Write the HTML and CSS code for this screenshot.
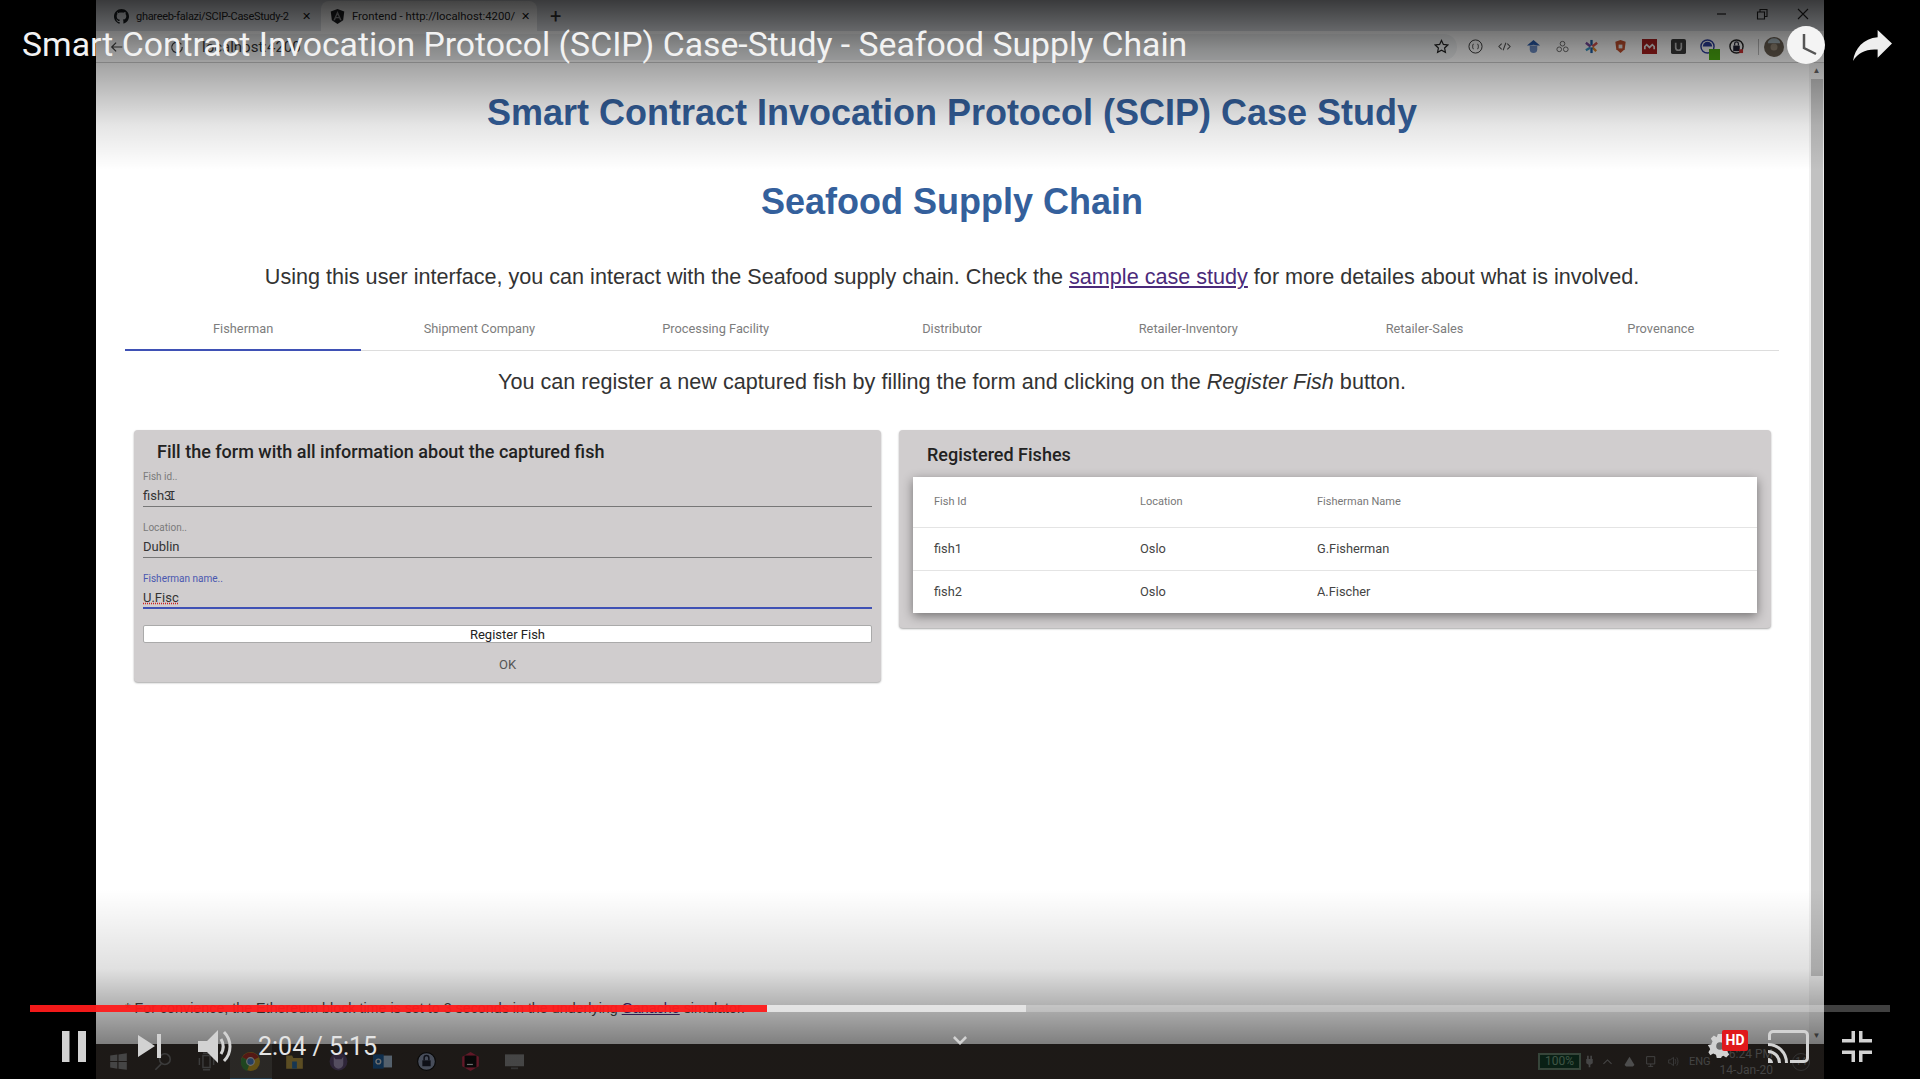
FILE: index.html
```html
<!DOCTYPE html>
<html lang="en">
<head>
    <meta charset="UTF-8">
    <meta name="viewport" content="width=device-width, initial-scale=1.0">
    <title>Smart Contract Invocation Protocol (SCIP) Case-Study - Seafood Supply Chain</title>
    <link rel="stylesheet" href="styles.css">
</head>
<body>

<div class="player">
    <div class="browser">
        <div class="tabstrip">
            <div class="tab">
                <svg class="tab-icon" viewBox="0 0 16 16"><path fill="#1b1f23" d="M8 0C3.6 0 0 3.6 0 8c0 3.5 2.3 6.5 5.5 7.6.4.1.5-.2.5-.4v-1.4c-2.2.5-2.7-1-2.7-1-.4-.9-.9-1.2-.9-1.2-.7-.5.1-.5.1-.5.8.1 1.2.8 1.2.8.7 1.2 1.9.9 2.3.7.1-.5.3-.9.5-1.1-1.8-.2-3.6-.9-3.6-4 0-.9.3-1.6.8-2.1-.1-.2-.4-1 .1-2.1 0 0 .7-.2 2.2.8.6-.2 1.3-.3 2-.3s1.4.1 2 .3c1.500-1 2.2-.8 2.2-.8.4 1.1.2 1.9.1 2.1.5.6.8 1.3.8 2.1 0 3.1-1.9 3.7-3.7 3.9.3.3.6.8.6 1.5v2.2c0 .2.1.5.6.4C13.7 14.5 16 11.5 16 8c0-4.4-3.6-8-8-8z"/></svg>
                <span class="tab-title tab-title-long">ghareeb-falazi/SCIP-CaseStudy-2</span>
                <span class="tab-close">✕</span>
            </div>
            <div class="tab tab-active">
                <svg class="tab-icon" viewBox="0 0 16 16"><path fill="#1c1d20" d="M8 0 .8 2.6 2 12l6 4 6-4 1.2-9.4z"/><path fill="#9a9a9c" d="M8 2.2 3.6 12h1.7l.9-2.2h3.6l.9 2.2h1.7zM8 6l1.3 2.6H6.7z"/></svg>
                <span class="tab-title">Frontend - http://localhost:4200/</span>
                <span class="tab-close">✕</span>
            </div>
            <span class="tab-new">+</span>
            <div class="win-buttons">
                <svg viewBox="0 0 14 14"><path d="M3 7h9" stroke="#222" stroke-width="1.2"/></svg>
                <svg viewBox="0 0 14 14" fill="none" stroke="#222" stroke-width="1.1"><path d="M2.500 5h7v7h-7zM5 5V2.500h7v7H9.500"/></svg>
                <svg viewBox="0 0 14 14"><path d="M2 2l10 10M12 2 2 12" stroke="#222" stroke-width="1.1"/></svg>
            </div>
        </div>
        <div class="toolbar">
            <svg class="nav-icon" viewBox="0 0 16 16" fill="none" stroke="#444" stroke-width="1.4"><path d="M14 8H2M7 3 2 8l5 5"/></svg>
            <div class="omnibox">
                <svg class="nav-icon" viewBox="0 0 16 16" fill="none" stroke="#444" stroke-width="1.4"><path d="M13 5a6 6 0 1 0 1 3"/></svg>
                <span class="url">localhost:4200</span>
                <svg class="star" viewBox="0 0 16 16" fill="none" stroke="#222" stroke-width="1.3"><path d="m8 1.500 2 4.300 4.700.6-3.400 3.200.9 4.700L8 12l-4.200 2.300.9-4.700L1.300 6.400 6 5.800z"/></svg>
            </div>
            <div class="extensions">
                <svg viewBox="0 0 16 16" fill="none" stroke="#333" stroke-width="1"><circle cx="8" cy="8" r="7"/><path d="M6 5.500c-1 0-1 1-1 2.500s0 2.500 1 2.500M10 5.500c1 0 1 1 1 2.500s0 2.500-1 2.500"/></svg>
                <svg viewBox="0 0 16 16" fill="none" stroke="#555" stroke-width="1.1"><path d="M5 5 2 8l3 3M11 5l3 3-3 3M9.500 4l-3 8"/></svg>
                <svg viewBox="0 0 16 16"><path fill="#2a5daf" d="M8 1 1 7h3l4-1 4 1h3z"/><path fill="#6f8fc7" d="M4 7h8v4a4 4 0 0 1-8 0z"/></svg>
                <svg viewBox="0 0 16 16" fill="none" stroke="#666" stroke-width="1"><circle cx="4.500" cy="11" r="2.500"/><circle cx="11.500" cy="11" r="2.500"/><circle cx="8" cy="5" r="2.500"/></svg>
                <svg viewBox="0 0 16 16" stroke-width="2.500"><path stroke="#1d5fa8" d="M8 1v6"/><path stroke="#d9534f" d="M14 4 9 8"/><path stroke="#e08a2c" d="m13 13-4-4"/><path stroke="#1d5fa8" d="M8 15V9"/><path stroke="#3a9bc8" d="M2 12l5-3"/><path stroke="#7a4aa0" d="m2 4 5 4"/></svg>
                <svg viewBox="0 0 16 16"><path fill="#c4502e" d="M8 1 2.500 3 3.500 11 8 15l4.500-4 1-8z"/><rect x="6" y="6" width="4" height="4" fill="#eee"/></svg>
                <svg viewBox="0 0 16 16"><rect width="16" height="16" fill="#a91f1f"/><path d="M3 11V8l2-2 3 3 3-3 2 2v3" fill="none" stroke="#eee" stroke-width="1.800"/></svg>
                <svg viewBox="0 0 16 16"><rect width="16" height="16" rx="2" fill="#3a3a3a"/><path d="M5 4v5a3 3 0 0 0 6 0V4" fill="none" stroke="#bbb" stroke-width="1.800"/></svg>
                <span class="ext-badge"><svg viewBox="0 0 16 16"><circle cx="8" cy="8" r="7" fill="none" stroke="#2c3e9e" stroke-width="1.500"/><path d="M3 8a5 5 0 0 1 10 0z" fill="#2c3e9e"/></svg><i class="ext-green"></i></span>
                <svg viewBox="0 0 16 16"><circle cx="8" cy="8" r="7" fill="none" stroke="#222" stroke-width="1.500"/><rect x="4.500" y="7" width="7" height="6" fill="#223"/><path d="M6 7V5a2 2 0 0 1 4 0v2" fill="none" stroke="#223" stroke-width="1.300"/><rect x="11" y="11" width="4" height="4" fill="#c33"/></svg>
                <i class="ext-sep"></i>
                <svg class="avatar" viewBox="0 0 16 16"><circle cx="8" cy="8" r="8" fill="#6a5f52"/><path d="M3 5a5 4 0 0 1 10 0z" fill="#a9b8bf"/><circle cx="8" cy="8" r="2.800" fill="#9a8d7c"/></svg>
            </div>
        </div>
        <div class="viewport">
            <div class="page">
                <h1 class="page-title">Smart Contract Invocation Protocol (SCIP) Case Study</h1>
                <h1 class="page-subtitle">Seafood Supply Chain</h1>
                <p class="lead">Using this user interface, you can interact with the Seafood supply chain. Check the <a href="#">sample case study</a> for more detailes about what is involved.</p>
                <div class="tabs">
                    <div class="tabs-item tabs-item-active">Fisherman</div>
                    <div class="tabs-item">Shipment Company</div>
                    <div class="tabs-item">Processing Facility</div>
                    <div class="tabs-item">Distributor</div>
                    <div class="tabs-item">Retailer-Inventory</div>
                    <div class="tabs-item">Retailer-Sales</div>
                    <div class="tabs-item">Provenance</div>
                </div>
                <p class="hint">You can register a new captured fish by filling the form and clicking on the <em>Register Fish</em> button.</p>
                <div class="cards">
                    <div class="card card-form">
                        <h2 class="card-title">Fill the form with all information about the captured fish</h2>
                        <div class="field">
                            <label>Fish id..</label>
                            <div class="field-value">fish3<span class="cursor">I</span></div>
                        </div>
                        <div class="field">
                            <label>Location..</label>
                            <div class="field-value">Dublin</div>
                        </div>
                        <div class="field field-focus">
                            <label>Fisherman name..</label>
                            <div class="field-value"><span class="misspelt">U.Fisc</span></div>
                        </div>
                        <button class="register">Register Fish</button>
                        <div class="ok">OK</div>
                    </div>
                    <div class="card card-table">
                        <h2 class="card-title">Registered Fishes</h2>
                        <table class="fish-table">
                            <thead>
                                <tr><th>Fish Id</th><th>Location</th><th>Fisherman Name</th></tr>
                            </thead>
                            <tbody>
                                <tr><td>fish1</td><td>Oslo</td><td>G.Fisherman</td></tr>
                                <tr><td>fish2</td><td>Oslo</td><td>A.Fischer</td></tr>
                            </tbody>
                        </table>
                    </div>
                </div>
                <p class="footnote">* For convience, the Ethereum block time is set to 3 seconds in the underlying <a href="#">Ganache</a> simulator.</p>
            </div>
            <div class="scrollbar">
                <span class="scroll-arrow">▲</span>
                <div class="scroll-thumb"></div>
                <span class="scroll-arrow">▼</span>
            </div>
        </div>
        <div class="taskbar">
            <svg viewBox="0 0 16 16"><path fill="#8a8a8a" d="M1 3l6-1v5.500H1zM8 2l7-1v6.500H8zM1 8.500h6V14l-6-1zM8 8.500h7V15l-7-1z"/></svg>
            <svg viewBox="0 0 16 16" fill="none" stroke="#777" stroke-width="1.300"><circle cx="10" cy="6" r="4.500"/><path d="M7 10l-5 5"/></svg>
            <svg viewBox="0 0 16 16" fill="none" stroke="#777" stroke-width="1.200"><path d="M5 3h6v10H5zM2 5v6M14 5v6M5 1h6M5 15h6"/></svg>
            <span class="task-active"><svg viewBox="0 0 16 16"><circle cx="8" cy="8" r="8" fill="#c9a227"/><path d="M8 8 1 4.500A8 8 0 0 1 15 4.500z" fill="#a8322a"/><path d="M8 8 5 16A8 8 0 0 1 1 4.500z" fill="#3f8a3f"/><circle cx="8" cy="8" r="3.200" fill="#4a7ec2" stroke="#ddd"/></svg></span>
            <svg viewBox="0 0 16 16"><path fill="#b89a45" d="M1 3h5l1 2h8v9H1z"/><rect x="6" y="8" width="4" height="6" fill="#2e6da4"/></svg>
            <svg viewBox="0 0 16 16"><circle cx="8" cy="8" r="7.500" fill="#5d4a72"/><path d="M4 4l1.500 2h5L12 4v6a4 4 0 0 1-8 0z" fill="#a99abf"/></svg>
            <svg viewBox="0 0 16 16"><rect x="6" y="3" width="10" height="10" fill="#a9c1d8"/><rect y="2" width="9" height="12" fill="#1f5d99"/><circle cx="4.500" cy="8" r="2" fill="none" stroke="#ddd" stroke-width="1.200"/></svg>
            <svg viewBox="0 0 16 16"><circle cx="8" cy="8" r="7.500" fill="#8f9bb5" stroke="#111"/><rect x="4.500" y="7" width="7" height="5" fill="#1c2030"/><path d="M6 7V5a2 2 0 0 1 4 0v2" fill="none" stroke="#1c2030" stroke-width="1.300"/></svg>
            <svg viewBox="0 0 16 16"><path fill="#c2314f" d="M1 4 8 0l7 4v8l-7 4-7-4z"/><rect x="3" y="3" width="10" height="10" fill="#111"/><rect x="5" y="10" width="5" height="1" fill="#ddd"/></svg>
            <svg viewBox="0 0 16 16"><rect y="2" width="16" height="10" fill="#8b8b8b"/><rect x="5" y="13" width="6" height="1.500" fill="#666"/></svg>
            <div class="tray">
                <span class="battery">100%</span>
                <svg class="tray-plug" viewBox="0 0 16 16"><path fill="#8b8b8b" d="M5 1h2v4h2V1h2v4h1v5l-3 2v3H7v-3L4 10V5h1z"/></svg>
                <svg viewBox="0 0 16 16" fill="none" stroke="#8b8b8b" stroke-width="1.300"><path d="m3 11 5-5 5 5"/></svg>
                <svg viewBox="0 0 16 16"><path fill="#9a9a9a" d="M8 2 14 12a3 3 0 0 1-2 2H4a3 3 0 0 1-2-2z"/></svg>
                <svg viewBox="0 0 16 16" fill="none" stroke="#8b8b8b" stroke-width="1.100"><path d="M2 2h10v9H2zM7 11v3M4 14h6"/></svg>
                <svg viewBox="0 0 16 16" fill="none" stroke="#777" stroke-width="1.100"><path d="M2 6v4h2l4 3V3L4 6zM10 5c1 2 1 4 0 6M12 3c2 3 2 7 0 10"/></svg>
                <span class="tray-lang">ENG</span>
                <div class="tray-clock"><span>6:24 PM</span><span>14-Jan-20</span></div>
                <span class="tray-badge">14</span>
            </div>
        </div>
    </div>

    <!-- youtube chrome, sits over the recording -->
    <div class="shade-top"></div>
    <div class="shade-bottom"></div>
    <div class="yt-top">
        <div class="yt-title">Smart Contract Invocation Protocol (SCIP) Case-Study - Seafood Supply Chain</div>
        <svg class="yt-clock" viewBox="0 0 38 38"><circle cx="19" cy="19" r="19" fill="#f4f4f4"/><path d="M17 8v14l12 6" fill="none" stroke="#555" stroke-width="2.500"/></svg>
        <svg class="yt-share" viewBox="0 0 38 30"><path fill="#eee" d="M24 0l14 13-14 14v-8C13 18 5 22 0 30 2 18 10 8 24 7z"/></svg>
    </div>
    <div class="yt-controls">
        <div class="progress">
            <div class="progress-buffer"></div>
            <div class="progress-played"></div>
        </div>
        <div class="yt-row">
            <svg class="yt-pause" viewBox="0 0 24 31"><path d="M0 0h7.500v31H0zM16 0h8v31h-8z"/></svg>
            <svg class="yt-next" viewBox="0 0 23 24"><path d="M0 1l17 11L0 23zM19 0h4v24h-4z"/></svg>
            <svg class="yt-volume" viewBox="0 0 35 35"><path d="M0 12h9L20 1v33L9 23H0z"/><path class="yt-wave" d="M23 10c3 5 3 10 0 15M26 3c8 8 8 21 0 29"/></svg>
            <span class="yt-time">2:04 / 5:15</span>
            <svg class="yt-chevron" viewBox="0 0 16 10"><path class="yt-wave" d="m1 1 7 7 7-7"/></svg>
            <span class="yt-settings">
                <svg viewBox="0 0 24 24"><path d="M10 1h4l.7 3 2.600 1.100 2.600-1.600 2.800 2.800-1.600 2.600L22 11.500l1 .5v2l-3 .7-1.100 2.600 1.600 2.600-2.800 2.800-2.600-1.600-1.400.6-.7 1.300h-4l-.7-3-2.600-1.100-2.600 1.600L1.300 17.700l1.600-2.600L1.800 12.500 1 12v-1l3-.7 1.100-2.600L3.500 5.100l2.800-2.800 2.600 1.600L9.300 3z"/><circle cx="12" cy="12" r="3.500" fill="#6b6b6b"/></svg>
                <b class="yt-hd">HD</b>
            </span>
            <svg class="yt-cast" viewBox="0 0 41 33"><path class="yt-wave" d="M1.500 10V5a3.500 3.500 0 0 1 3.500-3.500h31A3.500 3.500 0 0 1 39.500 5v23a3.500 3.500 0 0 1-3.500 3.500H22"/><path class="yt-wave" d="M0 14.500A18.500 18.500 0 0 1 18.500 33M0 21.500A11.500 11.500 0 0 1 11.500 33"/><path d="M0 28a5 5 0 0 1 5 5H0z"/></svg>
            <svg class="yt-exit" viewBox="0 0 30 31"><path d="M9.500 0H13v11.500H0V8h9.500zM17 0h3.500v8H30v3.500H17zM0 19.500h13V31H9.500v-8H0zM17 19.500h13V23h-9.500v8H17z"/></svg>
        </div>
    </div>
</div>

</body>
</html>
```

FILE: styles.css
```css
* {
    box-sizing: border-box;
}
body {
    margin: 0;
    background-color: #000;
    font-family: Roboto, "Liberation Sans", sans-serif;
    overflow: hidden;
}
.player {
    position: relative;
    width: 1920px;
    height: 1079px;
    padding: 0 96px;
    background-color: #000;
    overflow: hidden;
}
.browser {
    display: flex;
    flex-direction: column;
    height: 100%;
    background-color: #fff;
}

/* chrome window */
.tabstrip {
    display: flex;
    align-items: flex-end;
    height: 31px;
    padding-left: 9px;
    background-color: #dee1e6;
}
.tab {
    display: flex;
    align-items: center;
    width: 216px;
    height: 30px;
    padding: 0 10px 0 9px;
    font-size: 11.300px;
    color: #222;
}
.tab-active {
    background-color: #fff;
    border-radius: 8px 8px 0 0;
}
.tab-icon {
    flex: none;
    width: 15px;
    height: 15px;
    margin-right: 7px;
}
.tab-title {
    flex: 1;
    white-space: nowrap;
}
.tab-title-long {
    font-size: 11px;
    letter-spacing: -0.3px;
}
.tab-close {
    margin-left: 6px;
    font-size: 11px;
    color: #111;
}
.tab-new {
    align-self: center;
    margin-left: 13px;
    font-size: 20px;
    color: #333;
}
.win-buttons {
    display: flex;
    gap: 27px;
    align-self: flex-start;
    margin: 7px 14px 0 auto;
}
.win-buttons svg {
    width: 14px;
    height: 14px;
}
.toolbar {
    display: flex;
    align-items: center;
    height: 32px;
    padding: 0 0 0 14px;
    background-color: #fff;
    border-bottom: 1px solid #ccc;
}
.nav-icon {
    flex: none;
    width: 14px;
    height: 14px;
}
.omnibox {
    display: flex;
    align-items: center;
    flex: 1;
    height: 26px;
    margin-left: 38px;
    padding: 0 8px;
    background-color: #f1f3f4;
    border-radius: 13px;
}
.url {
    flex: 1;
    margin-left: 18px;
    font-size: 15px;
    color: #333;
}
.star {
    width: 15px;
    height: 15px;
}
.extensions {
    display: flex;
    align-items: center;
    gap: 14px;
    padding: 0 40px 0 11px;
}
.extensions svg {
    flex: none;
    display: block;
    width: 15px;
    height: 15px;
}
.ext-badge {
    position: relative;
    display: block;
}
.ext-green {
    position: absolute;
    right: -5px;
    bottom: -6px;
    width: 11px;
    height: 11px;
    background-color: #4caf10;
}
.ext-sep {
    width: 1px;
    height: 16px;
    background-color: #bbb;
}
.extensions .avatar {
    width: 20px;
    height: 20px;
    margin-left: -9px;
}

/* the page in the tab */
.viewport {
    display: flex;
    flex: 1;
    min-height: 0;
}
.page {
    display: flex;
    flex-direction: column;
    flex: 1;
    min-width: 0;
    padding: 0 30px 0 29px;
    font-family: "Liberation Sans", Arial, sans-serif;
}
.page-title,
.page-subtitle {
    margin: 0;
    color: #34609c;
    font-size: 36px;
    font-weight: bold;
    line-height: 42px;
    text-align: center;
}
.page-title {
    margin-top: 29px;
}
.page-subtitle {
    margin-top: 47px;
}
.lead {
    margin: 41px 0 0;
    font-size: 21.600px;
    line-height: 26px;
    text-align: center;
    color: #333;
}
.lead a {
    color: #4b2a7a;
}
.tabs {
    display: flex;
    margin-top: 15px;
    border-bottom: 1px solid #ddd;
}
.tabs-item {
    flex: 1;
    height: 45px;
    padding-top: 15px;
    font-family: Roboto, sans-serif;
    font-size: 12.800px;
    line-height: 18px;
    text-align: center;
    color: #7d7d7d;
}
.tabs-item-active {
    border-bottom: 2px solid #3f51b5;
    margin-bottom: -1px;
    height: 46px;
}
.hint {
    margin: 18px 0 0;
    font-size: 21.600px;
    line-height: 26px;
    text-align: center;
    color: #333;
}
.cards {
    display: flex;
    align-items: flex-start;
    gap: 18px;
    margin: 35px 8px 0 9px;
    font-family: Roboto, sans-serif;
}
.card {
    background-color: #d0cdce;
    border-radius: 4px;
    box-shadow: 0 1px 2px rgba(0, 0, 0, 0.35);
}
.card-form {
    width: 747px;
    height: 252px;
    padding: 11px 9px 0;
}
.card-table {
    flex: 1;
    height: 198px;
    padding: 14px 14px 0;
}
.card-title {
    margin: 0;
    font-size: 18px;
    font-weight: 500;
    line-height: 21px;
    color: #222;
}
.card-form .card-title {
    padding-left: 14px;
}
.card-table .card-title {
    padding-left: 14px;
}
.field {
    height: 51px;
    padding-top: 9px;
    color: #333;
}
.field label {
    display: block;
    font-size: 10px;
    line-height: 12px;
    color: #7a7a7a;
}
.field-value {
    height: 24px;
    border-bottom: 1px solid #777;
    padding-top: 5px;
    font-size: 13px;
    line-height: 15px;
}
.cursor {
    font-family: "Liberation Mono", monospace;
    font-size: 12px;
    margin-left: -3px;
}
.field-focus label {
    color: #4a58b0;
}
.field-focus .field-value {
    border-bottom: 2px solid #3f51b5;
}
.misspelt {
    text-decoration: underline dotted #c22;
}
.register {
    display: block;
    width: 100%;
    height: 18px;
    margin-top: 10px;
    padding: 0;
    background-color: #fff;
    border: 1px solid #aaa;
    border-radius: 2px;
    font-family: Roboto, sans-serif;
    font-size: 13px;
    color: #222;
}
.ok {
    margin-top: 14px;
    font-size: 13px;
    line-height: 16px;
    text-align: center;
    color: #555;
}
.fish-table {
    width: 100%;
    margin-top: 12px;
    border-collapse: collapse;
    background-color: #fff;
    box-shadow: 0 3px 10px rgba(0, 0, 0, 0.45);
    table-layout: fixed;
}
.fish-table th {
    height: 50px;
    padding: 0 0 0 21px;
    font-size: 11px;
    font-weight: 400;
    text-align: left;
    color: #777;
    border-bottom: 1px solid #e4e4e4;
}
.fish-table td {
    height: 43px;
    padding: 0 0 0 21px;
    font-size: 12.800px;
    color: #444;
}
.fish-table tbody tr:first-child td {
    border-bottom: 1px solid #e4e4e4;
}
.fish-table th:nth-child(1) {
    width: 206px;
}
.fish-table th:nth-child(2) {
    width: 177px;
}
.footnote {
    margin: auto 0 27px;
    font-size: 14.300px;
    line-height: 18px;
    color: #444;
}
.footnote a {
    color: #4b2a7a;
}
.scrollbar {
    display: flex;
    flex-direction: column;
    align-items: center;
    width: 15px;
    background-color: #f1f1f1;
}
.scroll-arrow {
    height: 16px;
    font-size: 8px;
    line-height: 16px;
    color: #666;
}
.scroll-thumb {
    flex: 1;
    width: 12px;
    margin-bottom: 52px;
    background-color: #c1c1c1;
}

/* windows taskbar */
.taskbar {
    display: flex;
    align-items: center;
    flex: none;
    gap: 25px;
    height: 35px;
    padding-left: 13px;
    background-color: #3a332e;
}
.taskbar > svg,
.task-active svg {
    flex: none;
    display: block;
    width: 19px;
    height: 19px;
}
.task-active {
    display: flex;
    align-items: center;
    justify-content: center;
    width: 42px;
    height: 35px;
    margin: 0 -11.500px;
    background-color: #55504b;
    border-bottom: 1px solid #4a7a9c;
}
.tray {
    display: flex;
    align-items: center;
    gap: 9px;
    margin-left: auto;
    padding-right: 14px;
    font-size: 12px;
    color: #888;
}
.tray svg {
    flex: none;
    width: 13px;
    height: 13px;
}
.battery {
    width: 43px;
    height: 17px;
    margin-right: -7px;
    border: 2px solid #6d8a74;
    background-color: #12402a;
    font-size: 12px;
    line-height: 13px;
    text-align: center;
    color: #7ea98a;
}
.tray .tray-plug {
    margin-right: -4px;
}
.tray-lang {
    font-size: 11px;
}
.tray-clock {
    display: flex;
    flex-direction: column;
    align-items: flex-end;
    font-size: 12px;
    line-height: 16px;
}
.tray-badge {
    width: 18px;
    height: 18px;
    margin-left: 10px;
    border: 1px solid #666;
    border-radius: 50%;
    font-size: 10px;
    line-height: 16px;
    text-align: center;
}

/* youtube overlay */
.shade-top,
.shade-bottom {
    position: absolute;
    left: 0;
    right: 0;
}
.shade-top {
    top: 0;
    height: 170px;
    background: linear-gradient(to bottom, rgba(0, 0, 0, 0.74), rgba(0, 0, 0, 0.42) 50px, rgba(0, 0, 0, 0.34) 68px, rgba(0, 0, 0, 0.1) 125px, rgba(0, 0, 0, 0));
}
.shade-bottom {
    bottom: 0;
    height: 190px;
    background: linear-gradient(to bottom, rgba(0, 0, 0, 0), rgba(0, 0, 0, 0.12) 80px, rgba(0, 0, 0, 0.5) 155px, rgba(0, 0, 0, 0.5));
}
.yt-top {
    position: absolute;
    top: 26px;
    left: 22px;
    right: 28px;
    display: flex;
    align-items: flex-start;
}
.yt-title {
    flex: 1;
    font-size: 33.750px;
    line-height: 38px;
    color: #f2f2f2;
    white-space: nowrap;
}
.yt-clock {
    width: 38px;
    height: 38px;
}
.yt-share {
    width: 39px;
    height: 31px;
    margin: 4px 0 0 28px;
}
.yt-controls {
    position: absolute;
    left: 30px;
    right: 30px;
    bottom: 15px;
    fill: #d2d2d2;
}
.yt-wave {
    fill: none;
    stroke: #d2d2d2;
    stroke-width: 3px;
}
.progress {
    position: relative;
    height: 7px;
    background-color: rgba(255, 255, 255, 0.25);
}
.progress-buffer,
.progress-played {
    position: absolute;
    top: 0;
    bottom: 0;
    left: 0;
}
.progress-buffer {
    width: 996px;
    background-color: rgba(255, 255, 255, 0.55);
}
.progress-played {
    width: 737px;
    background-color: rgba(255, 0, 0, 0.85);
}
.yt-row {
    display: flex;
    align-items: center;
    height: 36px;
    margin-top: 16px;
    padding: 0 18px 0 32px;
}
.yt-pause {
    width: 24px;
    height: 31px;
}
.yt-next {
    width: 23px;
    height: 24px;
    margin-left: 52px;
}
.yt-volume {
    width: 35px;
    height: 35px;
    margin-left: 37px;
}
.yt-time {
    margin-left: 25px;
    font-size: 25px;
    color: #e4e4e4;
}
.yt-chevron {
    width: 14px;
    height: 9px;
    margin: 0 0 11px 576px;
}
.yt-settings {
    position: relative;
    width: 26px;
    height: 26px;
    margin-left: auto;
}
.yt-settings svg {
    display: block;
    width: 26px;
    height: 26px;
}
.yt-hd {
    position: absolute;
    top: -3px;
    left: 15px;
    width: 26px;
    height: 21px;
    background-color: #e0181c;
    border-radius: 2px;
    font-size: 14px;
    line-height: 21px;
    text-align: center;
    color: #fff;
}
.yt-cast {
    width: 41px;
    height: 33px;
    margin-left: 35px;
}
.yt-exit {
    width: 30px;
    height: 31px;
    margin-left: 33px;
}
```
